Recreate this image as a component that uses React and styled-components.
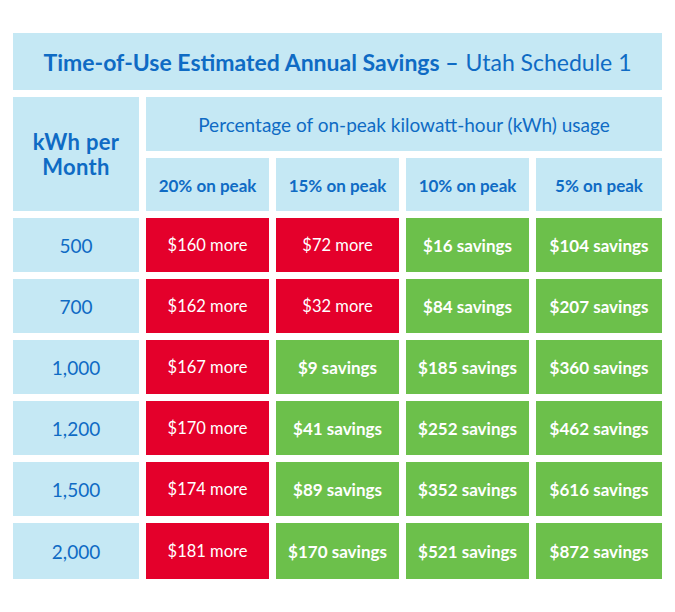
import styled, { createGlobalStyle } from 'styled-components';

const GlobalStyle = createGlobalStyle`
  body {
    margin: 0;
    background: #ffffff;
    font-family: Lato, "Open Sans", sans-serif;
  }
`;

const colors = {
  sky: '#c5e8f4',
  blue: '#0f6bc4',
  red: '#e4002b',
  green: '#6cc04b',
};

const Page = styled.div`
  padding: 33px 13px 0;
`;

const Table = styled.div`
  width: 649px;
  display: grid;
  grid-template-columns: 126px 123px 123px 123px 126px;
  grid-template-rows: 57px 54px 53px repeat(5, 54px) 56px;
  gap: 7px;
`;

const Cell = styled.div`
  display: flex;
  align-items: center;
  justify-content: center;
  text-align: center;
  background: ${({ $tone }) => colors[$tone] || colors.sky};
  color: ${({ $tone }) => ($tone === 'red' || $tone === 'green' ? '#ffffff' : colors.blue)};
`;

const TitleCell = styled(Cell)`
  grid-column: 1 / -1;
  font-size: 23px;
  padding-top: 1px;
`;

const Strong = styled.span`
  font-weight: 700;
  margin-right: 7px;
`;

const Light = styled.span`
  font-weight: 400;
`;

const UnitCell = styled(Cell)`
  grid-row: span 2;
  font-size: 22px;
  font-weight: 700;
  line-height: 25px;
  letter-spacing: 0.3px;
`;

const GroupCell = styled(Cell)`
  grid-column: span 4;
  font-size: 19px;
  font-weight: 400;
`;

const PeakCell = styled(Cell)`
  font-size: 17px;
  font-weight: 700;
  padding-top: 2px;
`;

const RowLabel = styled(Cell)`
  font-size: 19px;
  font-weight: 400;
`;

const Value = styled(Cell)`
  font-size: ${({ $tone }) => ($tone === 'green' ? '17px' : '16.5px')};
  font-weight: ${({ $tone }) => ($tone === 'green' ? 700 : 400)};
`;

const peaks = ['20% on peak', '15% on peak', '10% on peak', '5% on peak'];

const rows = [
  { kwh: '500', values: [160, 72, -16, -104] },
  { kwh: '700', values: [162, 32, -84, -207] },
  { kwh: '1,000', values: [167, -9, -185, -360] },
  { kwh: '1,200', values: [170, -41, -252, -462] },
  { kwh: '1,500', values: [174, -89, -352, -616] },
  { kwh: '2,000', values: [181, -170, -521, -872] },
];

const App = () => (
  <Page>
    <GlobalStyle />
    <Table>
      <TitleCell>
        <Strong>Time-of-Use Estimated Annual Savings –</Strong>
        <Light>Utah Schedule 1</Light>
      </TitleCell>

      <UnitCell>
        kWh per
        <br />
        Month
      </UnitCell>
      <GroupCell>Percentage of on-peak kilowatt-hour (kWh) usage</GroupCell>
      {peaks.map((p) => (
        <PeakCell key={p}>{p}</PeakCell>
      ))}

      {rows.map((row) => [
        <RowLabel key={row.kwh}>{row.kwh}</RowLabel>,
        ...row.values.map((v, i) => {
          const more = v > 0;
          return (
            <Value key={row.kwh + i} $tone={more ? 'red' : 'green'}>
              ${Math.abs(v)} {more ? 'more' : 'savings'}
            </Value>
          );
        }),
      ])}
    </Table>
  </Page>
);

export default App;
